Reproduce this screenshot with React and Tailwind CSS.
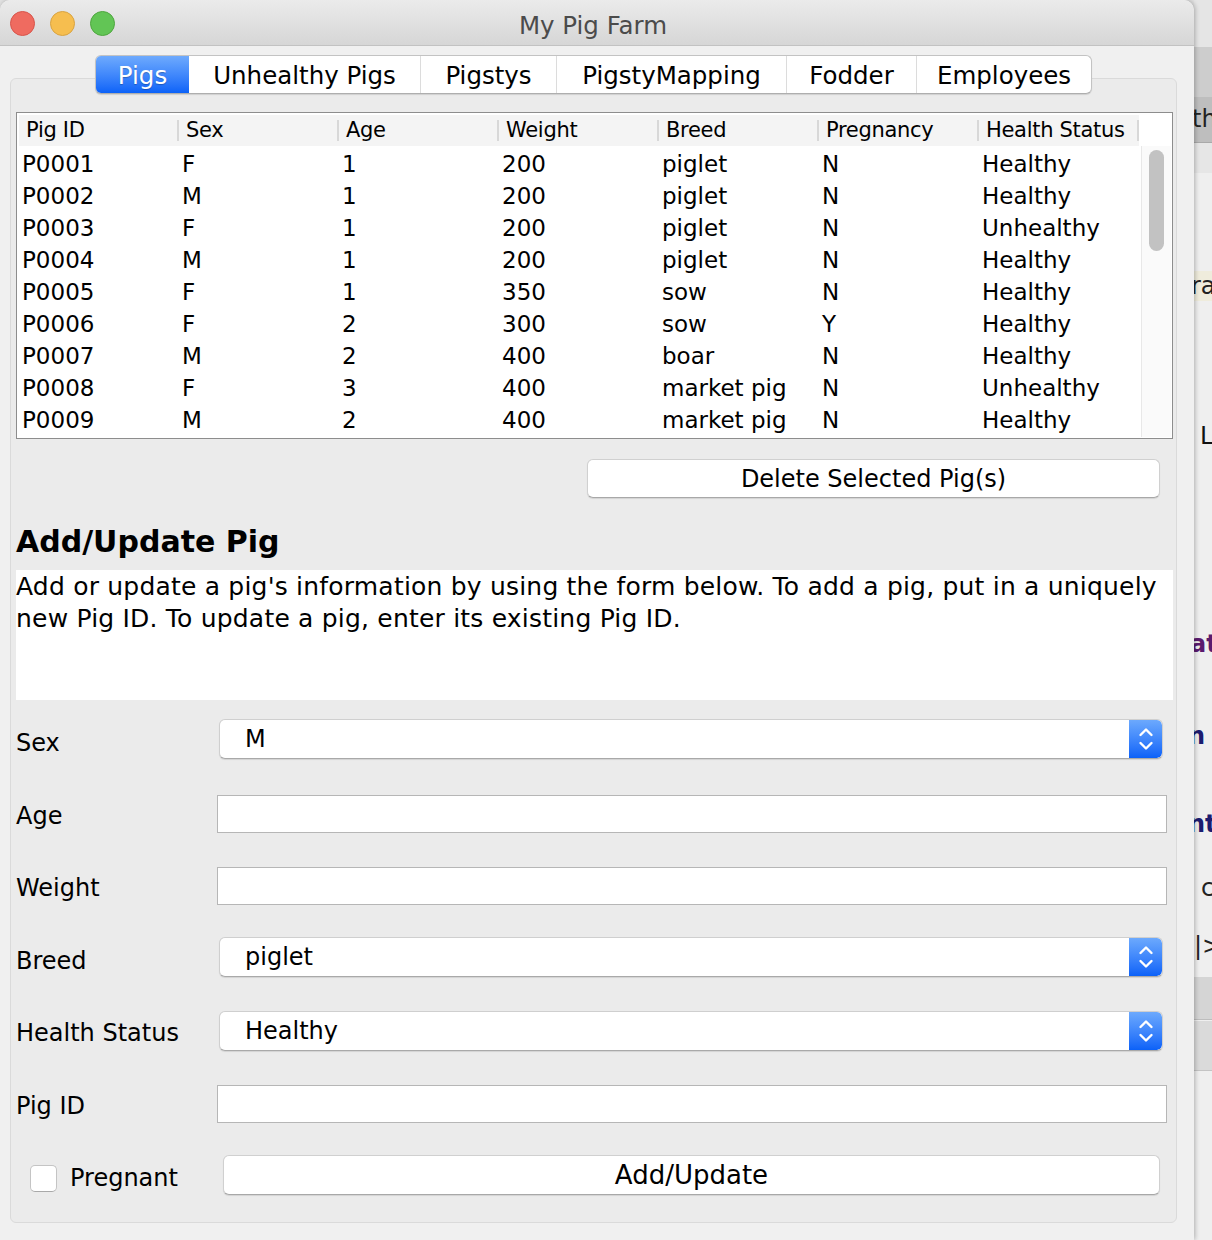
import React from "react";

const cols = ["Pig ID", "Sex", "Age", "Weight", "Breed", "Pregnancy", "Health Status"];
const rows = [
  ["P0001", "F", "1", "200", "piglet", "N", "Healthy"],
  ["P0002", "M", "1", "200", "piglet", "N", "Healthy"],
  ["P0003", "F", "1", "200", "piglet", "N", "Unhealthy"],
  ["P0004", "M", "1", "200", "piglet", "N", "Healthy"],
  ["P0005", "F", "1", "350", "sow", "N", "Healthy"],
  ["P0006", "F", "2", "300", "sow", "Y", "Healthy"],
  ["P0007", "M", "2", "400", "boar", "N", "Healthy"],
  ["P0008", "F", "3", "400", "market pig", "N", "Unhealthy"],
  ["P0009", "M", "2", "400", "market pig", "N", "Healthy"],
];

const tabs = [
  { label: "Pigs", w: "w-[93px]", active: true },
  { label: "Unhealthy Pigs", w: "w-[231px]" },
  { label: "Pigstys", w: "w-[136px]" },
  { label: "PigstyMapping", w: "w-[230px]" },
  { label: "Fodder", w: "w-[130px]" },
  { label: "Employees", w: "w-[175px]" },
];

function Stepper() {
  return (
    <div className="w-[33px] h-full bg-linear-to-b from-[#6ca9fd] to-[#0a61f8] flex items-center justify-center rounded-r-[5px]">
      <svg width="18" height="28" viewBox="0 0 18 28" fill="none" stroke="white" strokeWidth="2.4" strokeLinecap="round" strokeLinejoin="round">
        <path d="M3.5 10 L9 4.5 L14.5 10" />
        <path d="M3.5 18 L9 23.5 L14.5 18" />
      </svg>
    </div>
  );
}

function Combo({ value }) {
  return (
    <div className="ml-[2px] mr-[10px] flex-1 h-[40px] flex rounded-[6px] bg-white border border-[#cfcfcf] border-b-[#a9a9a9] shadow-[0_1px_1px_rgba(0,0,0,0.10)] overflow-hidden">
      <div className="flex-1 flex items-center pl-[25px] text-[24px] text-black leading-none pb-[1px]">{value}</div>
      <Stepper />
    </div>
  );
}

function Field() {
  return <div className="mr-[6px] flex-1 h-[38px] bg-white border border-[#b6b6b6]" />;
}

function Label({ children, low }) {
  return (
    <div className={low ? "w-[201px] shrink-0 text-[24px] text-black pt-[8px]" : "w-[201px] shrink-0 text-[24px] text-black pt-[4px]"}>
      {children}
    </div>
  );
}

export default function App() {
  return (
    <div className="w-[1212px] h-[1240px] bg-[#e2e2e2] flex overflow-hidden font-['DejaVu_Sans',sans-serif] text-black">
      {/* main window */}
      <div className="relative z-10 w-[1194px] shrink-0 h-full flex flex-col bg-[#f0f0f0] rounded-t-[10px] shadow-[1px_0_5px_rgba(0,0,0,0.28)] overflow-hidden">
        {/* title bar */}
        <div className="h-[46px] shrink-0 grid grid-cols-[1fr_auto_1fr] items-center bg-linear-to-b from-[#ebebeb] to-[#d6d6d6] border-b border-[#c2c2c2] rounded-t-[10px]">
          <div className="flex items-center gap-[15px] pl-[10px] pt-[2px]">
            <div className="w-[25px] h-[25px] rounded-full bg-[#ef6b60] border border-[#d8544a]" />
            <div className="w-[25px] h-[25px] rounded-full bg-[#f6be4f] border border-[#d9a340]" />
            <div className="w-[25px] h-[25px] rounded-full bg-[#62c555] border border-[#4ea63e]" />
          </div>
          <div className="text-[24.5px] text-[#4b4b4b] pr-[8px] pt-[7px]">My Pig Farm</div>
          <div />
        </div>

        {/* tabs */}
        <div className="relative z-10 ml-[10px] w-[1167px] mt-[9px] flex justify-center">
          <div className="flex h-[39px] rounded-[6px] border border-[#c3c3c3] border-b-[#aeaeae] bg-white shadow-[0_1px_1px_rgba(0,0,0,0.12)] overflow-hidden">
            {tabs.map((t, i) => (
              <div
                key={t.label}
                className={
                  t.active
                    ? `${t.w} h-full flex items-center justify-center pt-[3px] text-[24.5px] text-white bg-linear-to-b from-[#6eaafd] to-[#0a62f8] [text-shadow:0_1px_1px_rgba(0,0,0,0.25)]`
                    : i === 1
                    ? `${t.w} h-full flex items-center justify-center pt-[3px] text-[24.5px] text-black`
                    : `${t.w} h-full flex items-center justify-center pt-[3px] text-[24.5px] text-black border-l border-[#dcdcdc]`
                }
              >
                {t.label}
              </div>
            ))}
          </div>
        </div>

        {/* tab content panel */}
        <div className="ml-[10px] w-[1167px] -mt-[16px] border border-[#dadada] rounded-[6px] bg-[#ebebeb] pt-[33px] pl-[5px] pr-[3px] pb-[27px] flex flex-col">
          {/* table */}
          <div className="h-[327px] border border-[#8d8d8d] bg-white pt-[2px] pl-[2px] pr-[1px] pb-[1px] flex flex-col overflow-hidden">
            <div className="h-[31px] shrink-0 flex">
              <div className="w-[1120px] flex bg-[#f4f4f4]">
                {cols.map((c) => (
                  <div key={c} className="w-[160px] h-full flex items-center justify-between pl-[7px] text-[21px] tracking-[-0.3px]">
                    <span>{c}</span>
                    <div className="w-[2px] h-[21px] bg-[#d8d8d8]" />
                  </div>
                ))}
              </div>
              <div className="flex-1 bg-white" />
            </div>
            <div className="flex-1 flex min-h-0">
              <div className="w-[1122px] pt-[2px] overflow-hidden">
                {rows.map((r) => (
                  <div key={r[0]} className="h-[32px] flex items-center">
                    {r.map((v, j) => (
                      <div key={j} className="w-[160px] pl-[3px] text-[23px] whitespace-nowrap">
                        {v}
                      </div>
                    ))}
                  </div>
                ))}
              </div>
              <div className="w-[30px] bg-[#fafafa] border-l border-[#e8e8e8] pt-[4px] flex justify-center">
                <div className="w-[15px] h-[101px] rounded-full bg-[#c2c2c2]" />
              </div>
            </div>
          </div>

          {/* delete button */}
          <div className="mt-[20px] flex justify-end pr-[13px]">
            <div className="w-[573px] h-[39px] rounded-[6px] bg-white border border-[#d0d0d0] border-b-[#a8a8a8] shadow-[0_1px_1px_rgba(0,0,0,0.10)] flex items-center justify-center text-[24px]">
              Delete Selected Pig(s)
            </div>
          </div>

          {/* heading */}
          <div className="mt-[26px] h-[36px] leading-[36px] text-[30px] font-bold">Add/Update Pig</div>

          {/* description */}
          <div className="mt-[10px] h-[130px] bg-white pt-[1px] text-[25px] leading-[32px] tracking-[0.2px] whitespace-nowrap">
            Add or update a pig's information by using the form below. To add a pig, put in a uniquely
            <br />
            new Pig ID. To update a pig, enter its existing Pig ID.
          </div>

          {/* form */}
          <div className="flex flex-col">
            <div className="mt-[19px] h-[40px] flex items-center">
              <Label low>Sex</Label>
              <Combo value="M" />
            </div>
            <div className="mt-[35px] h-[40px] flex items-center">
              <Label>Age</Label>
              <Field />
            </div>
            <div className="mt-[32px] h-[40px] flex items-center">
              <Label>Weight</Label>
              <Field />
            </div>
            <div className="mt-[31px] h-[40px] flex items-center">
              <Label low>Breed</Label>
              <Combo value="piglet" />
            </div>
            <div className="mt-[34px] h-[40px] flex items-center">
              <Label>Health Status</Label>
              <Combo value="Healthy" />
            </div>
            <div className="mt-[33px] h-[40px] flex items-center">
              <Label>Pig ID</Label>
              <Field />
            </div>
            <div className="mt-[31px] h-[40px] flex items-center">
              <div className="w-[207px] shrink-0 flex items-center pl-[14px] pt-[6px]">
                <div className="w-[27px] h-[27px] rounded-[5px] bg-white border border-[#c4c4c4] border-b-[#a9a9a9]" />
                <span className="ml-[13px] text-[24px]">Pregnant</span>
              </div>
              <div className="mr-[13px] flex-1 h-[40px] rounded-[6px] bg-white border border-[#d0d0d0] border-b-[#a8a8a8] shadow-[0_1px_1px_rgba(0,0,0,0.10)] flex items-center justify-center text-[26px]">
                Add/Update
              </div>
            </div>
          </div>
        </div>
      </div>

      {/* background window sliver */}
      <div className="relative flex-1 h-full bg-[#efefef] overflow-hidden text-[24px]">
        <div className="absolute left-0 top-0 w-full h-[47px] bg-[#e5e5e5]" />
        <div className="absolute left-0 top-[47px] w-full h-[50px] bg-[#cdcdcd]" />
        <div className="absolute left-0 top-[97px] w-full h-[46px] bg-[#bebebe] border-b border-[#a9a9a9]">
          <span className="absolute left-[-2px] top-[4px] text-[#222]">th</span>
        </div>
        <div className="absolute left-0 top-[143px] w-full h-[30px] bg-[#e6e6e6]" />
        <div className="absolute left-0 top-[271px] w-full h-[30px] bg-[#efecdc]">
          <span className="absolute left-[-3px] top-[-3px] text-[#222]">ra</span>
        </div>
        <span className="absolute left-[6px] top-[418px] text-[#111]">L</span>
        <span className="absolute left-[-4px] top-[626px] font-bold text-[#5b1a6e]">at</span>
        <span className="absolute left-[-6px] top-[718px] font-bold text-[#1c1c70]">n</span>
        <span className="absolute left-[-6px] top-[806px] font-bold text-[#1c1c70]">nt</span>
        <span className="absolute left-[7px] top-[870px] text-[#222]">c</span>
        <span className="absolute left-[0px] top-[928px] text-[#222]">|&gt;</span>
        <div className="absolute left-0 top-[977px] w-full h-[43px] bg-[#d5d5d5] border-b border-[#bdbdbd]" />
        <div className="absolute left-0 top-[1021px] w-full h-[50px] bg-[#dadada] border-b border-[#c4c4c4]" />
      </div>
    </div>
  );
}
